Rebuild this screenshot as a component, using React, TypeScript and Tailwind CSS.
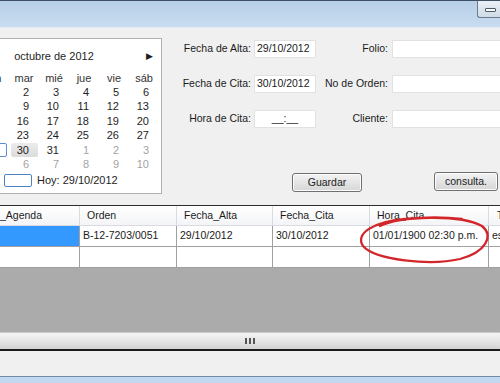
import React from "react";

const FONT = "font-['Liberation_Sans',Arial,sans-serif]";

const DAY_NAMES = ["dom", "lun", "mar", "mié", "jue", "vie", "sáb"];

// semanas de octubre 2012; g = día de otro mes
type Day = { n: number; g?: boolean };
const WEEKS: Day[][] = [
  [{ n: 30, g: true }, { n: 1 }, { n: 2 }, { n: 3 }, { n: 4 }, { n: 5 }, { n: 6 }],
  [{ n: 7 }, { n: 8 }, { n: 9 }, { n: 10 }, { n: 11 }, { n: 12 }, { n: 13 }],
  [{ n: 14 }, { n: 15 }, { n: 16 }, { n: 17 }, { n: 18 }, { n: 19 }, { n: 20 }],
  [{ n: 21 }, { n: 22 }, { n: 23 }, { n: 24 }, { n: 25 }, { n: 26 }, { n: 27 }],
  [{ n: 28 }, { n: 29 }, { n: 30 }, { n: 31 }, { n: 1, g: true }, { n: 2, g: true }, { n: 3, g: true }],
  [4, 5, 6, 7, 8, 9, 10].map((n) => ({ n, g: true })),
];

const COLS = [
  { title: "_Agenda", w: "w-[80px]", head: "pl-0", value: "" },
  { title: "Orden", w: "w-[97px]", head: "pl-[7px]", value: "B-12-7203/0051" },
  { title: "Fecha_Alta", w: "w-[96px]", head: "pl-[7px]", value: "29/10/2012" },
  { title: "Fecha_Cita", w: "w-[97px]", head: "pl-[7px]", value: "30/10/2012" },
  { title: "Hora_Cita", w: "w-[119px]", head: "pl-[7px]", value: "01/01/1900 02:30 p.m." },
  { title: "T", w: "w-[60px]", head: "pl-[8px]", value: "es" },
];

export default function App() {
  return (
    <div className={`relative flex h-[383px] w-[500px] flex-col overflow-hidden bg-[#f0f0f0] text-[10.5px] text-[#1b1b1b] ${FONT}`}>
      <TitleBar />

      <div className="flex h-[177px] shrink-0">
        <Calendar />
        <Form />
      </div>

      <Grid />

      <div className="h-[25px] shrink-0" />
      <div className="h-[7px] shrink-0 border-t border-[#6f8aa6] bg-[#c3d8ee]" />

      {/* marca roja a mano sobre Hora_Cita */}
      <svg className="pointer-events-none absolute left-0 top-0" width="500" height="383">
        <path
          d="M 380 226 C 400 216, 460 214, 482 226 C 494 236, 486 252, 460 259 C 430 266, 375 260, 363 246 C 355 234, 372 222, 405 219 C 425 217, 445 217, 462 219"
          fill="none"
          stroke="#d3262b"
          strokeWidth="2.3"
          strokeLinecap="round"
        />
      </svg>
    </div>
  );
}

function TitleBar() {
  return (
    <div className="flex h-[28px] shrink-0 justify-end border-t border-b border-t-[#3f5064] border-b-[#e4ebf2] bg-linear-to-b from-[#b7cfe8] to-[#c9dcf0]">
      <div className="flex h-[17px] w-[23px] items-center justify-center rounded-bl-[3px] border-b border-l border-[#6d7d8e] bg-linear-to-b from-[#eaf0f6] to-[#cfdbe7]">
        <div className="ml-[2px] mt-[2px] h-[4px] w-[11px] rounded-[1px] border border-[#4d5a68] bg-white" />
      </div>
    </div>
  );
}

function Calendar() {
  return (
    <div className="mt-[10px] h-[156px] w-[162px] shrink-0 overflow-hidden border-t border-r border-b border-[#b0b0b0] bg-white text-[11px] text-[#1e1e1e]">
      <div className="ml-[-51px] w-[210px]">
        <div className="mt-[9px] flex h-[16px] items-center justify-between px-[6px] leading-[16px]">
          <span className="text-[9px]">◀</span>
          <span>octubre de 2012</span>
          <span className="text-[9px]">▶</span>
        </div>

        <div className="mt-[7px] flex h-[14px] items-center">
          {DAY_NAMES.map((d) => (
            <div key={d} className="w-[30px] text-center text-[#333]">
              {d}
            </div>
          ))}
        </div>

        {WEEKS.map((week, i) => (
          <div key={i} className="flex h-[14.5px] items-center">
            {week.map((day, j) => {
              const isToday = i === 4 && j === 1;
              const isSelected = i === 4 && j === 2;
              return (
                <div key={j} className="relative flex h-[14px] w-[30px] items-center justify-end pr-[10px]">
                  {isToday && (
                    <div className="absolute inset-y-0 left-[2px] right-[2px] rounded-[2px] border border-[#5b8fcf]" />
                  )}
                  {isSelected && (
                    <div className="absolute inset-y-0 left-[2px] right-[1px] rounded-[2px] bg-linear-to-b from-[#ececec] to-[#dcdcdc]" />
                  )}
                  <span className={`relative leading-none ${day.g ? "text-[#a3a3a3]" : ""}`}>{day.n}</span>
                </div>
              );
            })}
          </div>
        ))}

        <div className="mt-[1px] flex h-[14px] items-center pl-[55px]">
          <div className="h-[13px] w-[28px] rounded-[2px] border border-[#4f84c4]" />
          <span className="ml-[5px]">Hoy: 29/10/2012</span>
        </div>
      </div>
    </div>
  );
}

function Form() {
  return (
    <div className="flex flex-1 flex-col">
      <FormRow className="mt-[12px]" left="Fecha de Alta:" value="29/10/2012" right="Folio:" />
      <FormRow className="mt-[17px]" left="Fecha de Cita:" value="30/10/2012" right="No de Orden:" />
      <FormRow className="mt-[17px]" left="Hora de Cita:" value="__:__" center right="Cliente:" />

      <div className="mt-[45px] flex items-start">
        <WinButton className="ml-[130px] w-[70px]">Guardar</WinButton>
        <WinButton className="-mt-[1px] ml-[72px] w-[64px]">consulta.</WinButton>
      </div>
    </div>
  );
}

function FormRow({
  left,
  value,
  right,
  center,
  className,
}: {
  left: string;
  value: string;
  right: string;
  center?: boolean;
  className?: string;
}) {
  return (
    <div className={`flex h-[18px] items-center ${className ?? ""}`}>
      <span className="w-[89px] text-right">{left}</span>
      <div
        className={`ml-[3px] flex h-[18px] w-[62px] items-center border border-[#e2e2e2] bg-white px-[2px] ${
          center ? "justify-center" : ""
        }`}
      >
        {value}
      </div>
      <span className="w-[72px] text-right">{right}</span>
      <div className="ml-[4px] h-[18px] w-[110px] shrink-0 border border-[#e2e2e2] bg-white" />
    </div>
  );
}

function WinButton({ className, children }: { className?: string; children: React.ReactNode }) {
  return (
    <div
      className={`flex h-[19px] items-center justify-center rounded-[3px] border border-[#707070] bg-linear-to-b from-[#f3f3f3] to-[#d6d6d6] shadow-[inset_0_0_0_1px_#fcfcfc] ${className ?? ""}`}
    >
      {children}
    </div>
  );
}

function Grid() {
  return (
    <div className="flex h-[146px] shrink-0 flex-col border-t border-b-2 border-t-[#2c2c2c] border-b-[#1c1c1c]">
      <div className="flex h-[20px] shrink-0 bg-linear-to-b from-white to-[#f3f4f6]">
        {COLS.map((c) => (
          <div key={c.title} className={`flex shrink-0 items-center border-r border-b border-[#d9dbe0] ${c.w} ${c.head}`}>
            {c.title}
          </div>
        ))}
      </div>

      <div className="flex h-[21px] shrink-0 bg-white">
        {COLS.map((c, i) => (
          <div
            key={c.title}
            className={`flex shrink-0 items-center overflow-hidden whitespace-nowrap border-r border-b border-[#a0a0a0] pl-[3px] ${c.w} ${
              i === 0 ? "bg-[#3399ff]" : ""
            }`}
          >
            {c.value}
          </div>
        ))}
      </div>

      <div className="flex h-[21px] shrink-0 bg-white">
        {COLS.map((c) => (
          <div key={c.title} className={`shrink-0 border-r border-b border-[#a0a0a0] ${c.w}`} />
        ))}
      </div>

      <div className="flex-1 bg-[#ababab]" />

      <div className="flex h-[17px] shrink-0 items-center justify-center border-t border-[#c9c9c9] bg-linear-to-b from-[#f4f4f4] via-[#e6e6e6] to-[#d4d4d4]">
        <div className="flex gap-[2px]">
          <span className="h-[6px] w-[2px] bg-[#555]" />
          <span className="h-[6px] w-[2px] bg-[#555]" />
          <span className="h-[6px] w-[2px] bg-[#555]" />
        </div>
      </div>
    </div>
  );
}
